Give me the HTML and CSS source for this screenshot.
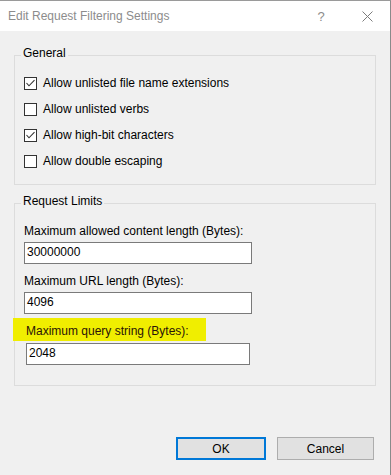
FILE: index.html
```html
<!DOCTYPE html>
<html>
<head>
<meta charset="utf-8">
<link rel="stylesheet" href="styles.css">
</head>
<body>
<div class="window">
  <div class="titlebar">
    <span class="title">Edit Request Filtering Settings</span>
    <span class="caption-btn help">?</span>
    <span class="caption-btn close">
      <svg width="11" height="11" viewBox="0 0 11 11"><path d="M0.5 0.5 L10.5 10.5 M10.5 0.5 L0.5 10.5" stroke="#7c7c7c" stroke-width="1" fill="none"/></svg>
    </span>
  </div>
  <div class="content">
    <fieldset class="group general">
      <legend>General</legend>
      <div class="check-row">
        <span class="checkbox"><svg width="11" height="11" viewBox="0 0 11 11"><polyline points="1.5,5 4,7.8 9.5,2.2" stroke="#333" stroke-width="1.1" fill="none"/></svg></span>
        <span>Allow unlisted file name extensions</span>
      </div>
      <div class="check-row">
        <span class="checkbox"></span>
        <span>Allow unlisted verbs</span>
      </div>
      <div class="check-row">
        <span class="checkbox"><svg width="11" height="11" viewBox="0 0 11 11"><polyline points="1.5,5 4,7.8 9.5,2.2" stroke="#333" stroke-width="1.1" fill="none"/></svg></span>
        <span>Allow high-bit characters</span>
      </div>
      <div class="check-row">
        <span class="checkbox"></span>
        <span>Allow double escaping</span>
      </div>
    </fieldset>
    <fieldset class="group limits">
      <legend>Request Limits</legend>
      <div class="field-label first">Maximum allowed content length (Bytes):</div>
      <div class="textbox">30000000</div>
      <div class="field-label">Maximum URL length (Bytes):</div>
      <div class="textbox">4096</div>
      <div class="field-label highlight">Maximum query string (Bytes):</div>
      <div class="textbox shifted">2048</div>
    </fieldset>
  </div>
  <div class="footer">
    <button class="btn default">OK</button>
    <button class="btn">Cancel</button>
  </div>
</div>
</body>
</html>
```
FILE: styles.css
```css
html, body {
  margin: 0;
  padding: 0;
  background: #f0f0f0;
}
body {
  font-family: "Liberation Sans", Arial, sans-serif;
  font-size: 12px;
  color: #000;
}
.window {
  width: 391px;
  height: 475px;
  box-sizing: border-box;
  border-top: 1px solid #9a9a9a;
  border-right: 1px solid #8a8a8a;
  background: #f0f0f0;
  display: flex;
  flex-direction: column;
}
.titlebar {
  height: 30px;
  background: #fff;
  display: flex;
  align-items: center;
  padding-left: 8px;
  color: #8c8c8c;
}
.title {
  flex: 1;
  line-height: 16px;
}
.caption-btn {
  width: 46px;
  height: 30px;
  display: flex;
  align-items: center;
  justify-content: center;
}
.help {
  font-size: 13px;
  color: #8c8c8c;
}
.content {
  padding: 14px 14px 0 14px;
}
.group {
  margin: 0;
  border: 1px solid #dcdcdc;
  padding: 10px 6px 15px 6px;
  min-width: 0;
}
.group legend {
  padding: 0 2px 4px 2px;
  line-height: 16px;
}
.check-row {
  display: flex;
  align-items: center;
  height: 16px;
  line-height: 16px;
  padding-left: 3px;
  gap: 6px;
}
.check-row + .check-row {
  margin-top: 10px;
}
.checkbox {
  width: 11px;
  height: 11px;
  border: 1px solid #333;
  background: #fff;
  display: flex;
}
.limits {
  margin-top: 8px;
  padding-bottom: 20px;
}
.field-label {
  line-height: 16px;
  padding-left: 3px;
  margin-top: 9px;
}
.field-label.first {
  margin-top: 0;
}
.textbox {
  margin: 3px 0 0 3px;
  width: 228px;
  height: 18px;
  line-height: 18px;
  padding: 0 0 2px 2px;
  box-sizing: border-box;
  height: 22px;
  border: 1px solid #7a7a7a;
  background: #fff;
}
.field-label.highlight {
  margin: 4px 0 0 -8px;
  width: 193px;
  box-sizing: border-box;
  padding: 5px 0 2px 13px;
  background: #f0ee00;
  color: #2a1408;
}
.textbox.shifted {
  margin: 2px 0 0 5px;
  width: 224px;
}
.footer {
  display: flex;
  justify-content: flex-end;
  gap: 11px;
  padding-right: 16px;
  margin-top: 51px;
}
.btn {
  font-family: "Liberation Sans", Arial, sans-serif;
  font-size: 12px;
  color: #000;
  height: 23px;
  width: 97px;
  padding: 0;
  border: 1px solid #adadad;
  background: #e1e1e1;
  box-sizing: border-box;
}
.btn.default {
  width: 90px;
  border: 2px solid #0078d7;
}
```
